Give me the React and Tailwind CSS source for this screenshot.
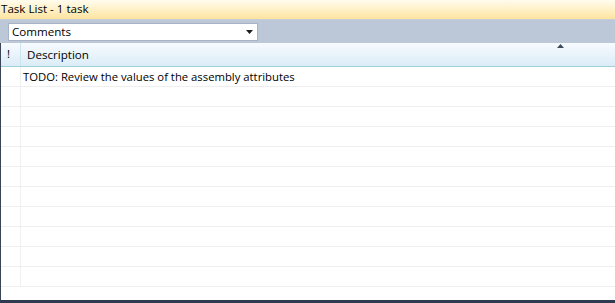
const rows = Array.from({ length: 11 })

export default function App() {
  return (
    <div className="w-[615px] h-[303px] flex flex-col bg-white overflow-hidden text-[11.3px] text-black" style={{ fontFamily: '"Open Sans", "Noto Sans", sans-serif' }}>
      {/* 标题栏 */}
      <div className="h-[19px] shrink-0 flex items-center pl-[1px] bg-gradient-to-b from-[#fffcee] via-[#fff1c6] to-[#fde3a0] leading-none">
        <span className="-mt-[2px] text-[11.6px]">Task List - 1 task</span>
      </div>

      {/* 工具栏 */}
      <div className="h-[24px] shrink-0 flex items-center pl-[8px] bg-[#bcc7d8] border-t border-[#c7cdd6]">
        <div className="w-[250px] h-[18px] bg-white border border-[#a9b3c3] flex items-center justify-between pl-[3px] pr-[4px]">
          <span className="leading-none text-[11.6px]">Comments</span>
          <svg width="7" height="4" viewBox="0 0 7 4"><path d="M0 0h7L3.5 4z" fill="#1e1e1e" /></svg>
        </div>
      </div>

      {/* 表格 */}
      <div className="flex-1 flex border-l border-[#3b4457]">
        <div className="flex-1 flex flex-col">
          <div className="h-[24px] shrink-0 flex border-b border-[#9fd0dc] bg-gradient-to-b from-[#f7fbfe] to-[#dbecf7] relative">
            <div className="w-[20px] flex items-center pl-[6px] border-r border-[#cfe3ef]">!</div>
            <div className="flex-1 flex items-center pl-[6px] text-[11.6px]">Description</div>
            <svg className="absolute left-[556px] top-[1px]" width="7" height="4" viewBox="0 0 7 4"><path d="M0 4h7L3.5 0z" fill="#3c4a5c" /></svg>
          </div>
          <div className="flex-1 flex flex-col">
            {rows.map((_, i) => (
              <div key={i} className="h-[20px] shrink-0 flex border-b border-[#eeeeee]">
                <div className="w-[20px] border-r border-[#f0f0f0]" />
                <div className="flex-1 flex items-center pl-[2px] leading-none">
                  {i === 0 ? 'TODO: Review the values of the assembly attributes' : ''}
                </div>
              </div>
            ))}
          </div>
        </div>
      </div>

      {/* 底部 */}
      <div className="h-[3px] shrink-0 bg-[#2d3a50]" />
    </div>
  )
}
